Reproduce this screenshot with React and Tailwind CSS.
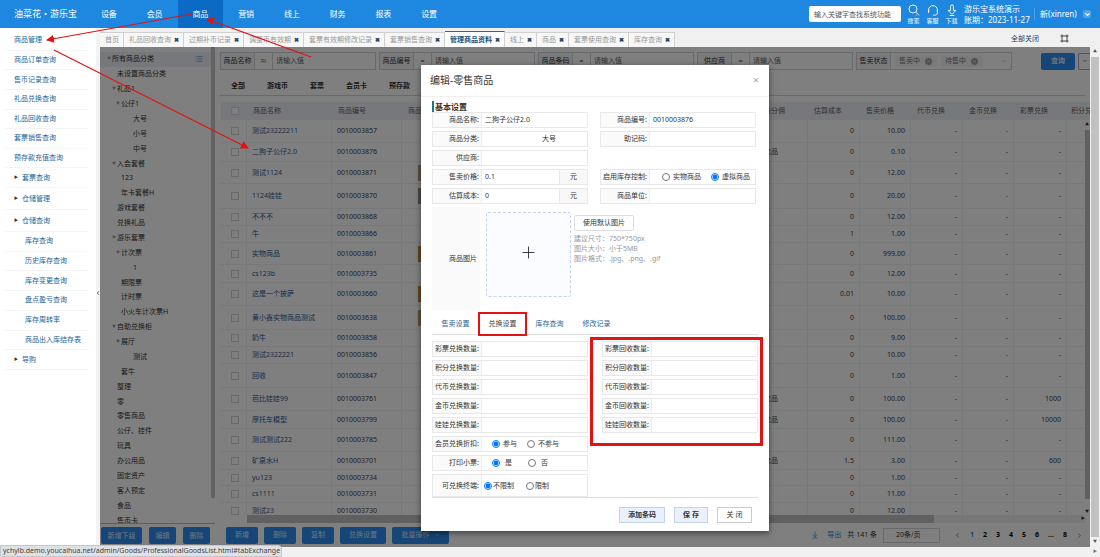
import React, { useState } from 'react';
import { ArrowDownToLine, ChevronDown, List, ChevronLeft, ChevronRight, CircleX, Plus } from 'lucide-react';

const NAV = ['设备', '会员', '商品', '营销', '线上', '财务', '报表', '设置'];

// 左側選單
const MENU_TOP = ['商品管理', '商品订单查询', '售币记录查询', '礼品兑换查询', '礼品回收查询', '套票销售查询', '预存款充值查询'];
const MENU_SUB = ['库存查询', '历史库存查询', '库存变更查询', '盘点盈亏查询', '库存周转率', '商品出入库结存表'];

const TABS = ['首页', '礼品回收查询', '过期补币记录', '调整币有效期', '套票有效期修改记录', '套票销售查询', '管理商品资料', '线上', '商品', '套票使用查询', '库存查询'];

// [名稱, 層級, 是否可展開]
const TREE = [
  ['所有商品分类', 0, true],
  ['未设置商品分类', 1],
  ['礼品1', 1, true],
  ['公仔1', 2, true],
  ['大号', 3],
  ['小号', 3],
  ['中号', 3],
  ['入会套餐', 1, true],
  ['123', 2],
  ['年卡套餐H', 2],
  ['游戏套餐', 1],
  ['兑换礼品', 1],
  ['游乐套票', 1, true],
  ['计次票', 2, true],
  ['1', 3],
  ['期限票', 2],
  ['计时票', 2],
  ['小火车计次票H', 2],
  ['自助兑换柜', 1, true],
  ['展厅', 2, true],
  ['测试', 3],
  ['套牛', 2],
  ['整理', 1],
  ['零', 1],
  ['零售商品', 1],
  ['公仔、挂件', 1],
  ['玩具', 1],
  ['办公用品', 1],
  ['固定资产', 1],
  ['客人预定', 1],
  ['食品', 1],
  ['售币卡', 1],
];

const INDENT = ['pl-[7px]', 'pl-3', 'pl-4', 'pl-7'];

const ROWS = [
  { h: 'h-[23px]', name: '测试23222211', code: '0010003857', cost: '0', price: '10.00' },
  { h: 'h-[19px]', name: '二狗子公仔2.0', code: '0010003876', cost: '0', price: '0.10', type: '纪念品' },
  { h: 'h-[22px]', name: '测试1124', code: '0010003871', cost: '0', price: '12.00', pic: 'bg-[#b99f8c]' },
  { h: 'h-[25px]', name: '1124娃娃', code: '0010003870', cost: '0', price: '20.00', pic: 'bg-[#9a958f]' },
  { h: 'h-[17px]', name: '不不不', code: '0010003868', cost: '0', price: '12.00' },
  { h: 'h-[17px]', name: '牛', code: '0010003866', cost: '1', price: '1.00' },
  { h: 'h-[22px]', name: '实物商品', code: '0010003861', cost: '0', price: '999.00', pic: 'bg-[#c98b4a]' },
  { h: 'h-[18px]', name: 'cs123b', code: '0010003735', cost: '0', price: '12.00' },
  { h: 'h-[23px]', name: '这是一个披萨', code: '0010003660', cost: '0.01', price: '10.00', pic: 'bg-[#c98b4a]' },
  { h: 'h-6', name: '黄小鑫实物商品测试', code: '0010003638', cost: '0', price: '100.00', pic: 'bg-[#b8a070]' },
  { h: 'h-[17px]', name: '奶牛', code: '0010003858', cost: '0', price: '9.00' },
  { h: 'h-[17px]', name: '测试2322221', code: '0010003856', cost: '0', price: '10.00' },
  { h: 'h-6', name: '回收', code: '0010003847', cost: '0', price: '1.00' },
  { h: 'h-[23px]', name: '芭比娃娃99', code: '0010003761', cost: '0', price: '100.00', type: '纪念品', ticket: '1000' },
  { h: 'h-[18px]', name: '摩托车模型', code: '0010003799', cost: '0', price: '100.00', type: '纪念品', ticket: '10000' },
  { h: 'h-[23px]', name: '测试测试222', code: '0010003785', cost: '0', price: '111.00' },
  { h: 'h-[18px]', name: '矿泉水H', code: '0010003701', cost: '1.5', price: '3.00', type: '纪念品', ticket: '600' },
  { h: 'h-4', name: 'yu123', code: '0010003734', cost: '0', price: '1.00' },
  { h: 'h-[17px]', name: 'cs1111', code: '0010003731', cost: '0', price: '11.00' },
  { h: 'h-[17px]', name: '测试23', code: '0010003730', cost: '0', price: '12.00' },
];

const App = () => {
  const [open, setOpen] = useState(true);

  return (
    <div className="relative flex h-screen w-full flex-col overflow-hidden bg-white font-['Noto_Sans','Noto_Sans_CJK_SC',sans-serif] text-[7px] leading-[10px] text-[#333]">
      <TopBar />
      <div className="flex min-h-0 flex-1">
        <SideMenu />
        <div className="flex min-w-0 flex-1 flex-col">
          <TabStrip />
          <div className="flex min-h-0 flex-1">
            <div className="relative flex min-w-0 flex-1">
              <CategoryTree />
              <GoodsPanel />
              {open && (
                <div className="absolute inset-0 flex items-start justify-center bg-black/50 pt-[18px]">
                  <EditDialog onClose={() => setOpen(false)} />
                </div>
              )}
            </div>
            {/* 頁面捲軸 */}
            <div className="flex w-[10px] flex-col items-center bg-[#f1f1f1] text-[4px] text-[#555]">
              <span className="h-[10px]">▲</span>
              <div className="w-2 flex-1 bg-[#c1c1c1]"></div>
              <span className="h-[10px]">▼</span>
            </div>
          </div>
          <div className="flex h-[10px] shrink-0 items-center justify-end bg-[#f1f1f1] pr-[3px] text-[4px] text-[#777]">▶</div>
        </div>
      </div>

      <div className="absolute bottom-0 left-0 h-3 w-[282px] rounded-tr-sm border border-[#c4c8cc] bg-[#dee1e6] px-0.5 leading-[10px] whitespace-nowrap text-[#444]">
        ychylb.demo.youcaihua.net/admin/Goods/ProfessionalGoodsList.html#tabExchange
      </div>
      <GuideArrows />
    </div>
  );
};

const TopBar = () => (
  <header className="flex h-7 shrink-0 items-center bg-[#1e88e0] text-[8px] text-white">
    <h1 className="w-[86px] pl-[14px] text-[9px] whitespace-nowrap">油菜花・游乐宝</h1>
    <nav className="grid h-full w-[366px] grid-cols-8">
      {NAV.map((item) => (
        <a key={item} href="#" className={`flex items-center justify-center ${item === '商品' ? 'bg-[#0b6bc4]' : ''}`}>
          {item}
        </a>
      ))}
    </nav>
    <input
      aria-label="查找系统功能"
      placeholder="输入关键字查找系统功能"
      className="ml-auto h-4 w-[92px] rounded-xs bg-white px-[5px] text-[7px] placeholder:text-[#555]"
    />
    <div className="ml-1 flex gap-0.5 text-[6px] leading-[8px]">
      <HeaderButton label="搜索">
        <circle cx="5" cy="5" r="4" />
        <path d="M8 8.2L11 11.4M8.4 11.2h.6" />
      </HeaderButton>
      <HeaderButton label="客服">
        <path d="M1.6 8.2V6a4.4 4.4 0 0 1 8.8 0v2.2M1.6 6v3M10.4 6v3c0 1.4-1.4 2.2-3.2 2.2H6" />
      </HeaderButton>
      <HeaderButton label="下载">
        <path d="M4.6 6.4V2.2a1.4 1.4 0 0 1 2.8 0v4.2h2.4L6 10.4L2.2 6.4zM3.6 11.5h4.8" />
      </HeaderButton>
    </div>
    <div className="ml-1 w-[70px] leading-[11px] whitespace-nowrap">
      <div>游乐宝系统演示</div>
      <div>账期：2023-11-27</div>
    </div>
    <div className="h-3 w-px bg-white/20"></div>
    <button className="ml-[5px] flex w-[60px] items-center justify-between pr-[9px] whitespace-nowrap">
      新(xinren)
      <span className="flex size-2 items-center justify-center rounded-xs bg-[#4fa3ea]">
        <ChevronDown size={7} strokeWidth={4} />
      </span>
    </button>
  </header>
);

const HeaderButton = ({ label, children }) => (
  <button className="flex w-[17px] flex-col items-center gap-px">
    <svg width="12" height="12" viewBox="0 0 12 12" fill="none" stroke="currentColor" strokeWidth="0.9">
      {children}
    </svg>
    {label}
  </button>
);

const MenuLink = ({ children, pad = 'pl-[9px]', arrow }) => (
  <a href="#" className={`mr-2 ml-[5px] flex items-center border-b border-[#f4f4f4] text-[#1c6397] ${pad}`}>
    {arrow && <span className="w-2 text-[4px] text-[#333]">▶</span>}
    {children}
  </a>
);

const SideMenu = () => (
  <aside className="flex w-[100px] shrink-0">
    <div className="flex-1 pt-[3px]">
      <div className="grid h-[157px] auto-rows-fr">
        {MENU_TOP.map((m) => <MenuLink key={m}>{m}</MenuLink>)}
        <MenuLink arrow>套票查询</MenuLink>
      </div>
      <div className="grid h-11 auto-rows-fr">
        <MenuLink arrow>仓储管理</MenuLink>
        <MenuLink arrow>仓储查询</MenuLink>
      </div>
      <div className="grid h-[138px] auto-rows-fr">
        {MENU_SUB.map((m) => <MenuLink key={m} pad="pl-5">{m}</MenuLink>)}
        <MenuLink arrow>导购</MenuLink>
      </div>
    </div>
    <button aria-label="收起菜单" className="flex w-1 items-center bg-[#f3f3f3] text-[#333]">
      <ChevronLeft size={6} strokeWidth={3} className="-ml-px shrink-0" />
    </button>
  </aside>
);

const TabStrip = () => (
  <div className="flex h-[19px] shrink-0 items-end bg-[#f0f0f0]">
    {TABS.map((tab, i) => {
      const active = tab === '管理商品资料';
      return (
        <div
          key={tab}
          className={`flex items-center gap-[3px] border-r border-[#d0d0d0] pr-1 pl-[5px] whitespace-nowrap ${
            active ? 'h-4 border-t border-t-[#1a6f9c] bg-white font-bold text-[#24527a]' : 'h-[15px] border-t bg-[#f7f7f7] text-[#999]'
          }`}
        >
          <button>{tab}</button>
          {i > 0 && <button aria-label={`关闭${tab}`} className="w-[5px] text-[6px] font-bold text-[#1f4059]">✖</button>}
        </div>
      );
    })}
    <button className="mb-[3px] ml-auto text-[#1d3c6b]">全部关闭</button>
    <button aria-label="全屏" className="mr-[31px] mb-1 ml-[21px]">
      <svg width="9" height="9" viewBox="0 0 9 9" fill="none" stroke="#333" strokeWidth="0.9">
        <path d="M2 0.5V8.5M7 0.5V8.5M0.5 2H8.5M0.5 7H8.5" />
      </svg>
    </button>
  </div>
);

const ActionButton = ({ children, className = '' }) => (
  <button className={`flex h-[17px] items-center justify-center rounded-xs bg-[#2c8aee] whitespace-nowrap text-[#dfe9f5] ${className}`}>
    {children}
  </button>
);

const CategoryTree = () => (
  <section className="flex w-[115px] shrink-0 flex-col">
    <div className="flex min-h-0 flex-1">
      <div className="min-w-0 flex-1 overflow-hidden pt-[5px]">
        <ul className="grid h-[476px] auto-rows-fr">
          {TREE.map(([name, level, expandable]) => (
            <li key={name} className={`flex items-center ${INDENT[level]} ${level === 0 ? 'bg-[#eef1f6]' : ''}`}>
              <span className="w-[5px] shrink-0 text-[4px] text-[#999]">{expandable ? '▼' : ''}</span>
              {name}
              {level === 0 && <List size={8} className="mr-2 ml-auto text-[#2c7be0]" />}
            </li>
          ))}
        </ul>
      </div>
      <div className="mb-[25px] w-1 bg-[#c4c4c4]"></div>
    </div>
    <div className="flex h-6 shrink-0 items-center gap-[7px] border-t border-[#bbb] pl-px">
      <ActionButton className="w-[41px]">新增下级</ActionButton>
      <ActionButton className="w-[27px]">编辑</ActionButton>
      <ActionButton className="w-[27px]">删除</ActionButton>
    </div>
  </section>
);

const Filter = ({ label, op }) => (
  <div className="flex h-[18px] w-[156px] shrink-0 border border-[#d0d2d8]">
    <label htmlFor={label} className="flex w-[34px] items-center justify-center border-r border-[#d0d2d8] bg-[#f2f4f8]">
      {label}
    </label>
    <span className="flex w-[18px] items-center justify-center border-r border-[#d0d2d8]">{op}</span>
    <input id={label} placeholder="请输入值" className="min-w-0 flex-1 px-[3px] placeholder:text-[#666]" />
  </div>
);

const Tag = ({ children }) => (
  <span className="flex h-3 items-center gap-1 bg-[#f4f4f5] px-1 text-[#777]">
    {children}
    <CircleX size={9} className="fill-[#999] text-[#eee]" />
  </span>
);

const HEAD = 'overflow-hidden bg-[#eef1f6] pl-1.5 text-left font-normal whitespace-nowrap text-[#606266]';
const CELL = 'border-r border-b border-[#eff1f4] p-0 leading-[8px] whitespace-nowrap overflow-hidden';
const NUM = `${CELL} pr-[5px] text-right`;

const GoodsPanel = () => (
  <section className="flex min-w-0 flex-1 flex-col pt-[5px]">
    <div className="flex items-center gap-[3px] overflow-hidden pl-[5px]">
      <Filter label="商品名称" op="≈" />
      <Filter label="商品编号" op="=" />
      <Filter label="商品条码" op="=" />
      <Filter label="供应商" op="=" />
      <div className="flex h-[18px] w-[156px] shrink-0 border border-[#d0d2d8]">
        <span className="flex w-[34px] items-center justify-center border-r border-[#d0d2d8] bg-[#f2f4f8]">售卖状态</span>
        <div className="flex flex-1 items-center gap-1 pl-1">
          <Tag>售卖中</Tag>
          <Tag>待售中</Tag>
          <ChevronDown size={6} className="mr-1 ml-auto text-[#999]" />
        </div>
      </div>
      <ActionButton className="ml-auto w-[34px] shrink-0 font-bold">查询</ActionButton>
      <button aria-label="更多条件" className="flex h-[17px] w-3 shrink-0 items-center justify-center rounded-l-xs border border-r-0 border-[#9ab]">
        <ChevronDown size={6} />
      </button>
    </div>

    <div className="mx-[5px] mt-[7px] flex h-[19px] items-center gap-[22px] border-b border-[#d0d2d8] pl-[11px] font-bold">
      {['全部', '游戏币', '套票', '会员卡', '预存款'].map((t) => <button key={t}>{t}</button>)}
    </div>

    <div className="relative mt-1.5 flex min-h-0 flex-1 flex-col overflow-hidden pl-1.5">
      <div className="min-h-0 flex-1 overflow-hidden">
        <table className="w-full table-fixed border-separate border-spacing-0 text-[#444]">
          <colgroup>
            <col className="w-[26px]" />
            <col className="w-[85px]" />
            <col className="w-[70px]" />
            <col className="w-[58px]" />
            <col />
            <col className="w-[57px]" />
            <col className="w-[52px]" />
            <col className="w-[51px]" />
            <col className="w-[52px]" />
            <col className="w-[51px]" />
            <col className="w-[53px]" />
            <col className="w-[23px]" />
          </colgroup>
          <thead>
            <tr className="h-[18px]">
              <th className={HEAD}><input type="checkbox" aria-label="全选" className="ml-1 block size-2 appearance-none border border-[#d6d9de] bg-white" /></th>
              <th className={HEAD}>商品名称</th>
              <th className={HEAD}>商品编号</th>
              <th className={HEAD}>商品图片</th>
              <th className={HEAD}>商品条码</th>
              <th className={HEAD}>参与分佣</th>
              <th className={HEAD}>估算成本</th>
              <th className={HEAD}>售卖价格</th>
              <th className={HEAD}>代币兑换</th>
              <th className={HEAD}>金币兑换</th>
              <th className={HEAD}>彩票兑换</th>
              <th className="overflow-hidden bg-[#eef1f6] pl-1 text-left font-normal whitespace-nowrap text-[#606266]">积分兑换</th>
            </tr>
          </thead>
          <tbody>
            {ROWS.map((r) => (
              <tr key={r.code} className={r.h}>
                <td className={CELL}>
                  <input type="checkbox" aria-label={r.name} className="ml-[10px] block size-2 appearance-none border border-[#d0d2d6]" />
                </td>
                <td className={`${CELL} pl-[5px]`}><a href="#" className="text-[#2c5a94]">{r.name}</a></td>
                <td className={`${CELL} pl-[5px]`}>{r.code}</td>
                <td className={CELL}>{r.pic && <div className={`ml-4 h-4 w-6 ${r.pic}`}></div>}</td>
                <td className={CELL}></td>
                <td className={`${CELL} pl-1.5`}>{r.type}</td>
                <td className={NUM}>{r.cost}</td>
                <td className={NUM}>{r.price}</td>
                <td className={NUM}>-</td>
                <td className={NUM}>-</td>
                <td className={NUM}>{r.ticket || '-'}</td>
                <td className={CELL}></td>
              </tr>
            ))}
          </tbody>
        </table>
      </div>
      <div className="mr-[5px] ml-[26px] flex h-2 shrink-0 items-center bg-[#f1f1f1] text-[4px]">
        <div className="h-full w-[82%] bg-[#c1c1c1]"></div>
        <span className="ml-auto">▶</span>
      </div>
      {/* 表格捲軸 */}
      <div className="absolute top-[18px] right-0 bottom-0 flex w-[5px] flex-col overflow-hidden bg-white text-[4px]">
        <span className="h-[10px]">▲</span>
        <div className="flex-1 bg-[#c1c1c1]"></div>
        <span className="h-6 pt-2">▼</span>
      </div>
    </div>

    <div className="flex h-6 shrink-0 items-center gap-1.5 pl-[11px]">
      <ActionButton className="w-8">新增</ActionButton>
      <ActionButton className="w-8">删除</ActionButton>
      <ActionButton className="w-8">复制</ActionButton>
      <ActionButton className="w-[46px]">兑换设置</ActionButton>
      <ActionButton className="w-[57px] gap-1">批量操作 <ChevronDown size={6} /></ActionButton>
      <button className="ml-auto flex items-center gap-2 text-[#2c7be0]">
        <ArrowDownToLine size={8} /> 导出
      </button>
      <span className="whitespace-nowrap">共 141 条</span>
      <select aria-label="每页条数" className="h-[15px] w-[57px] appearance-none border border-[#d0d2d8] pl-3">
        <option>20条/页</option>
      </select>
      <nav className="mr-[7px] flex w-[137px] items-center justify-between pl-2 font-bold">
        <ChevronLeft size={7} />
        {['1', '2', '3', '4', '5', '6', '...', '8'].map((p) => (
          <button key={p} className={p === '1' ? 'text-[#2c8aee]' : 'text-black'}>{p}</button>
        ))}
        <ChevronRight size={7} />
      </nav>
    </div>
  </section>
);

const BOX = 'flex h-4 border border-[#e8e8e8]';

const Field = ({ id, label, value, unit, center }) => (
  <div className={BOX}>
    <label htmlFor={id} className="flex w-[49px] shrink-0 items-center justify-end border-r border-[#eee] bg-[#fafafa] pr-0.5 whitespace-nowrap">{label}:</label>
    <input id={id} defaultValue={value} className={`min-w-0 flex-1 px-[3px] ${center ? 'pl-[60px]' : ''}`} />
    {unit && <span className="flex w-7 items-center justify-center border-l border-[#e8e8e8] bg-[#f8f8f8]">{unit}</span>}
  </div>
);

const RadioRow = ({ name, label, options, selected, className = 'h-4', group = 'gap-[10px] pl-[10px]', gap = 'gap-[3px]' }) => (
  <fieldset aria-label={label} className={`flex border border-[#e8e8e8] ${className}`}>
    <span className="flex w-[49px] shrink-0 items-center justify-end border-r border-[#eee] bg-[#fafafa] pr-0.5 whitespace-nowrap">{label}:</span>
    <div className={`flex items-center ${group}`}>
      {options.map((o) => (
        <label key={o} className={`flex items-center whitespace-nowrap ${gap}`}>
          <input type="radio" name={name} defaultChecked={o === selected} className="size-2" />
          {o}
        </label>
      ))}
    </div>
  </fieldset>
);

const EXCHANGE = ['彩票', '积分', '代币', '金币', '娃娃'];

const EditDialog = ({ onClose }) => (
  <div role="dialog" aria-label="编辑-零售商品" className="w-[348px] bg-white shadow-[0_2px_6px_rgba(0,0,0,0.5)]">
    <div className="flex h-8 items-center justify-between border-b border-[#f0f0f0] pr-[10px] pb-0.5 pl-[9px]">
      <h2 className="text-[10px]">编辑-零售商品</h2>
      <button aria-label="关闭" onClick={onClose} className="text-[11px] text-[#aaa]">×</button>
    </div>

    <div className="px-[11px] pt-1">
      <h3 className="flex h-[11px] items-center border-l-2 border-[#0f7a8a] pl-px text-[8px] font-bold">基本设置</h3>
      <div className="grid grid-cols-[156px_156px] gap-x-3 gap-y-[3px]">
        <Field id="name" label="商品名称" value="二狗子公仔2.0" />
        <Field id="code" label="商品编号" value="0010003876" />
        <Field id="category" label="商品分类" value="大号" center />
        <Field id="mnemonic" label="助记码" />
        <Field id="supplier" label="供应商" />
        <span></span>
        <Field id="price" label="售卖价格" value="0.1" unit="元" />
        <RadioRow name="stock" label="启用库存控制" options={['实物商品', '虚拟商品']} selected="虚拟商品" group="gap-[10px] pl-3" />
        <Field id="cost" label="估算成本" value="0" unit="元" />
        <Field id="unit" label="商品单位" />
      </div>

      <div className="mt-[3px] flex h-[103px]">
        <div className="flex w-12 items-center justify-end bg-[#fafafa] pr-[3px]">商品图片</div>
        <button aria-label="上传图片" className="mt-[5px] ml-1.5 flex size-[85px] items-center justify-center rounded-xs border border-dashed border-[#c3d3e6] bg-[#fbfcff] pb-[5px]">
          <Plus size={19} strokeWidth={1.2} />
        </button>
        <div className="mt-2 ml-[3px] text-[#999]">
          <button className="mb-[3px] block h-4 w-[60px] rounded-xs border border-[#ddd] text-[#333]">使用默认图片</button>
          <p>建议尺寸：750*750px</p>
          <p>图片大小：小于5MB</p>
          <p>图片格式：.jpg、.png、.gif</p>
        </div>
      </div>

      <div role="tablist" className="flex h-[25px] items-center border-b border-[#ddd] pt-1 text-[#2a6496]">
        {['售卖设置', '兑换设置', '库存查询', '修改记录'].map((t) => (
          <button key={t} role="tab" className={`relative w-[47px] ${t === '兑换设置' ? 'text-[#444]' : ''}`}>
            {t}
            {t === '兑换设置' && <span className="absolute -inset-x-px -inset-y-[7px] border-2 border-[#e01414]"></span>}
          </button>
        ))}
      </div>

      <div className="relative mt-1.5 grid grid-cols-[156px_156px] gap-x-[14px] gap-y-[3px]">
        {EXCHANGE.map((k) => (
          <React.Fragment key={k}>
            <Field id={`${k}-out`} label={`${k}兑换数量`} />
            <Field id={`${k}-in`} label={`${k}回收数量`} />
          </React.Fragment>
        ))}
        <RadioRow name="discount" label="会员兑换折扣" options={['参与', '不参与']} selected="参与" />
        <span></span>
        <RadioRow name="print" label="打印小票" options={['是', '否']} selected="是" group="gap-4 pl-[10px]" gap="gap-[5px]" />
        <span></span>
        <RadioRow name="terminal" label="可兑换终端" options={['不限制', '限制']} selected="不限制" className="h-[23px]" group="gap-3 pl-0.5" gap="gap-px" />
        <div className="pointer-events-none absolute -top-1 left-[158px] h-[109px] w-[173px] border-3 border-[#e01414]"></div>
      </div>
    </div>

    <div className="mx-[11px] flex h-[34px] items-center justify-end gap-[9px] border-t border-[#ddd] pr-1.5">
      <button className="h-4 w-[46px] border border-[#c5d3e6] bg-[#e8f1fd] font-bold">添加条码</button>
      <button className="h-4 w-[34px] border border-[#c5d3e6] bg-[#e8f1fd] font-bold">保 存</button>
      <button onClick={onClose} className="h-4 w-[35px] border border-[#ccc]">关 闭</button>
    </div>
  </div>
);

// 操作步驟標示箭頭
const GuideArrows = () => (
  <svg className="pointer-events-none absolute top-0 left-0" width="330" height="160" fill="none" stroke="#e01414" strokeWidth="1.2">
    <defs>
      <marker id="head" markerUnits="userSpaceOnUse" markerWidth="8" markerHeight="8" refX="7" refY="4" orient="auto">
        <path d="M0 0L8 4L0 8Z" fill="#e01414" stroke="none" />
      </marker>
    </defs>
    <path d="M192 14L47 40" markerEnd="url(#head)" />
    <path d="M311 57L207 19" markerEnd="url(#head)" />
    <path d="M54 50L248 148" markerEnd="url(#head)" />
  </svg>
);

export default App;
